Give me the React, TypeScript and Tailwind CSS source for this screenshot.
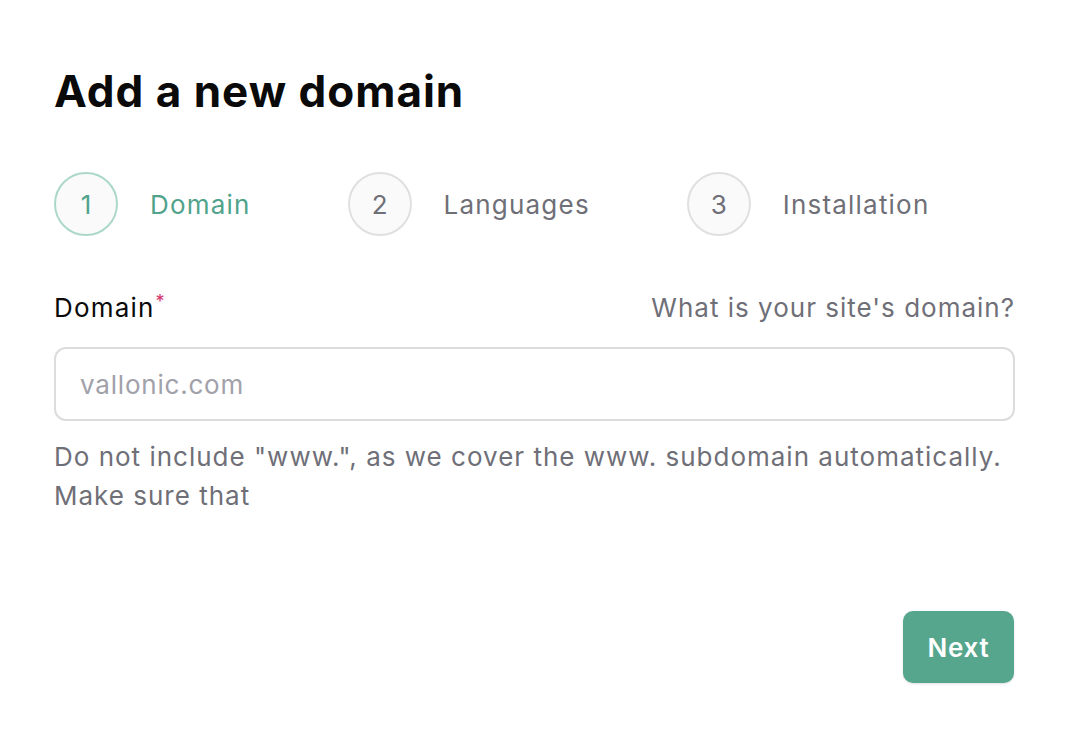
import React from "react";

const steps = [
  { n: 1, label: "Domain", active: true },
  { n: 2, label: "Languages", active: false },
  { n: 3, label: "Installation", active: false },
];

function Stepper() {
  return (
    <div className="flex items-center gap-[97px]">
      {steps.map((s) => (
        <div key={s.n} className="flex items-center gap-[32px]">
          <div
            className={
              s.active
                ? "flex h-[64px] w-[64px] items-center justify-center rounded-full border-2 border-[#acd8c9] bg-[#fafafa] text-[26px] text-[#50a38a]"
                : "flex h-[64px] w-[64px] items-center justify-center rounded-full border-2 border-[#e0e0e0] bg-[#fafafa] text-[26px] text-[#6f6f78]"
            }
          >
            {s.n}
          </div>
          <span
            className={
              s.active
                ? "text-[26px] tracking-[1.2px] text-[#50a38a]"
                : "text-[26px] tracking-[1.2px] text-[#6f6f78]"
            }
          >
            {s.label}
          </span>
        </div>
      ))}
    </div>
  );
}

export default function App() {
  return (
    <div
      className="min-h-[750px] bg-white pl-[54px] pr-[57px] pt-[62px]"
      style={{ fontFamily: "Inter, 'Noto Sans', sans-serif" }}
    >
      <h1 className="text-[44px] font-bold leading-[58px] tracking-[1px] text-[#0a0a0a]">
        Add a new domain
      </h1>

      <div className="mt-[52px]">
        <Stepper />
      </div>

      <div className="mt-[52px] flex items-end justify-between">
        <label className="text-[26px] tracking-[1.2px] text-[#0a0a0a]">
          Domain
          <sup className="ml-[1px] text-[18px] text-[#d6336c]">*</sup>
        </label>
        <span className="text-[26px] tracking-[1px] text-[#6f6f78]">What is your site's domain?</span>
      </div>

      <input
        type="text"
        placeholder="vallonic.com"
        className="mt-[20px] h-[74px] w-full rounded-[12px] border-2 border-[#dcdcdc] px-[24px] text-[26px] tracking-[0.8px] text-[#0a0a0a] outline-none placeholder:text-[#a1a1aa]"
      />

      <p className="mt-[16px] text-[26px] leading-[39px] tracking-[1px] text-[#6f6f78]">
        Do not include "www.", as we cover the www. subdomain automatically.
        <br />
        Make sure that
      </p>

      <div className="mt-[96px] flex justify-end pr-[1px]">
        <button className="h-[72px] w-[111px] rounded-[10px] bg-[#55a68d] text-[26px] font-semibold tracking-[0.8px] text-white shadow-sm">
          Next
        </button>
      </div>
    </div>
  );
}
